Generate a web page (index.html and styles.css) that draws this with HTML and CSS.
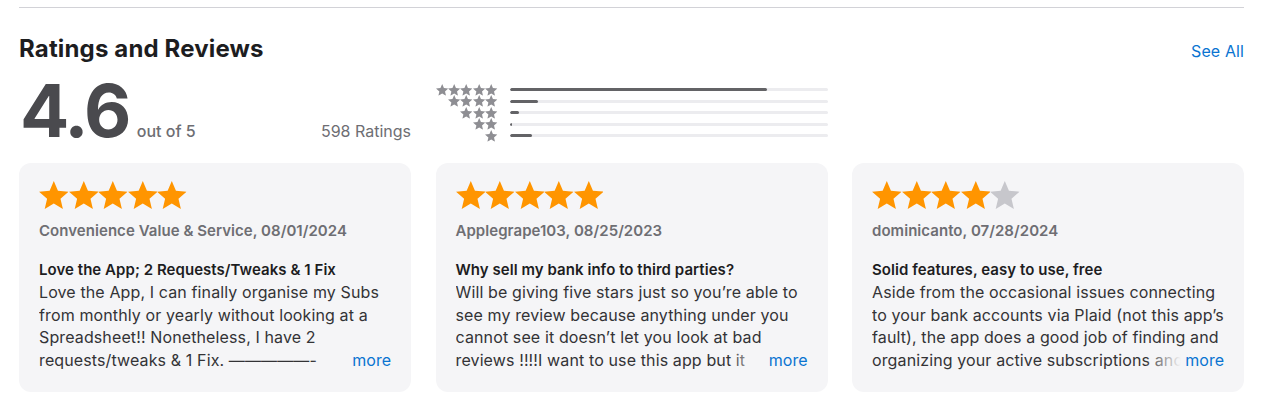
FILE: index.html
```html
<!DOCTYPE html>
<html lang="en">
<head>
<meta charset="utf-8">
<title>Ratings and Reviews</title>
<link rel="stylesheet" href="styles.css">
</head>
<body>
<svg width="0" height="0" class="defs">
  <defs>
    <symbol id="star" viewBox="2 2 20 19"><path d="M12 17.27L18.18 21l-1.64-7.03L22 9.24l-7.19-.61L12 2 9.19 8.63 2 9.24l5.46 4.73L5.82 21z"/></symbol>
  </defs>
</svg>
<section class="reviews">
  <div class="rule"></div>
  <header class="head">
    <h2 class="title">Ratings and Reviews</h2>
    <a class="see-all" href="#">See All</a>
  </header>
  <div class="summary">
    <div class="score">
      <div class="score-main"><span class="big">4.6</span><span class="outof">out of 5</span></div>
      <div class="count">598 Ratings</div>
    </div>
    <div class="hist">
      <div class="hrow"><div class="hstars"><svg><use href="#star"/></svg><svg><use href="#star"/></svg><svg><use href="#star"/></svg><svg><use href="#star"/></svg><svg><use href="#star"/></svg></div><div class="bar"><div class="fill" style="width:81%"></div></div></div>
      <div class="hrow"><div class="hstars"><svg><use href="#star"/></svg><svg><use href="#star"/></svg><svg><use href="#star"/></svg><svg><use href="#star"/></svg></div><div class="bar"><div class="fill" style="width:9%"></div></div></div>
      <div class="hrow"><div class="hstars"><svg><use href="#star"/></svg><svg><use href="#star"/></svg><svg><use href="#star"/></svg></div><div class="bar"><div class="fill" style="width:3%"></div></div></div>
      <div class="hrow"><div class="hstars"><svg><use href="#star"/></svg><svg><use href="#star"/></svg></div><div class="bar"><div class="fill" style="width:0.8%"></div></div></div>
      <div class="hrow"><div class="hstars"><svg><use href="#star"/></svg></div><div class="bar"><div class="fill" style="width:7%"></div></div></div>
    </div>
  </div>
  <div class="cards">
    <article class="card">
      <div class="stars"><svg class="on"><use href="#star"/></svg><svg class="on"><use href="#star"/></svg><svg class="on"><use href="#star"/></svg><svg class="on"><use href="#star"/></svg><svg class="on"><use href="#star"/></svg></div>
      <div class="author">Convenience Value &amp; Service, 08/01/2024</div>
      <h3 class="rtitle">Love the App; 2 Requests/Tweaks &amp; 1 Fix</h3>
      <div class="body-wrap">
        <p class="body">Love the App, I can finally organise my Subs from monthly or yearly without looking at a Spreadsheet!! Nonetheless, I have 2 requests/tweaks &amp; 1 Fix. —————-<br>1. Please add the option to sort by price.</p>
        <a class="more" href="#">more</a>
      </div>
    </article>
    <article class="card">
      <div class="stars"><svg class="on"><use href="#star"/></svg><svg class="on"><use href="#star"/></svg><svg class="on"><use href="#star"/></svg><svg class="on"><use href="#star"/></svg><svg class="on"><use href="#star"/></svg></div>
      <div class="author">Applegrape103, 08/25/2023</div>
      <h3 class="rtitle">Why sell my bank info to third parties?</h3>
      <div class="body-wrap">
        <p class="body">Will be giving five stars just so you’re able to see my review because anything under you cannot see it doesn’t let you look at bad reviews !!!!I want to use this app but it unfortunately shares my information.</p>
        <a class="more" href="#">more</a>
      </div>
    </article>
    <article class="card">
      <div class="stars"><svg class="on"><use href="#star"/></svg><svg class="on"><use href="#star"/></svg><svg class="on"><use href="#star"/></svg><svg class="on"><use href="#star"/></svg><svg class="off"><use href="#star"/></svg></div>
      <div class="author">dominicanto, 07/28/2024</div>
      <h3 class="rtitle">Solid features, easy to use, free</h3>
      <div class="body-wrap">
        <p class="body">Aside from the occasional issues connecting to your bank accounts via Plaid (not this app’s fault), the app does a good job of finding and organizing your active subscriptions and bills.</p>
        <a class="more" href="#">more</a>
      </div>
    </article>
  </div>
</section>
</body>
</html>
```

FILE: styles.css
```css
* { box-sizing: border-box; }
html, body { margin: 0; padding: 0; background: #fff; }
body {
  font-family: Inter, "Noto Sans", "Liberation Sans", sans-serif;
  color: #1d1d1f;
  -webkit-font-smoothing: antialiased;
}
.defs { position: absolute; width: 0; height: 0; }
.reviews {
  width: 1225px;
  margin-left: 19px;
  padding-top: 7px;
}
.rule { height: 1px; background: #d2d2d7; }
.head {
  display: flex;
  justify-content: space-between;
  align-items: baseline;
  margin-top: 27px;
}
.title {
  margin: 0;
  font-size: 24px;
  line-height: 28px;
  font-weight: 700;
  letter-spacing: 0.15px;
}
.see-all {
  color: #0a74d1;
  text-decoration: none;
  font-size: 16px;
  letter-spacing: 0.1px;
}
.summary {
  display: grid;
  grid-template-columns: repeat(3, 1fr);
  column-gap: 24.5px;
  margin-top: 7px;
}
.score {
  display: flex;
  justify-content: space-between;
  align-items: baseline;
}
.score-main { display: flex; align-items: baseline; }
.big {
  font-size: 73px;
  line-height: 82px;
  font-weight: 700;
  color: #4a4a4e;
  letter-spacing: -2.6px;
  margin-left: 1px;
}
.outof {
  font-size: 16px;
  font-weight: 500;
  color: #6e6e73;
  margin-left: 8px;
}
.count {
  font-size: 16px;
  color: #6e6e73;
}
.hist {
  padding-top: 14px;
  display: flex;
  flex-direction: column;
}
.hrow {
  display: flex;
  align-items: center;
  height: 11.5px;
}
.hstars {
  width: 62px;
  display: flex;
  justify-content: flex-end;
  fill: #8e8e93;
}
.hstars svg { width: 12.4px; height: 11.8px; }
.bar {
  margin-left: 12px;
  flex: 1;
  height: 3px;
  border-radius: 2px;
  background: #ececef;
  overflow: hidden;
}
.fill { height: 100%; background: #636366; border-radius: 2px; }
.cards {
  display: grid;
  grid-template-columns: repeat(3, 1fr);
  column-gap: 24.5px;
  margin-top: 11px;
}
.card {
  background: #f5f5f7;
  border-radius: 12px;
  padding: 18px 20px 21px 20px;
  height: 229px;
}
.stars { display: flex; height: 28px; }
.stars svg { width: 29.6px; height: 28px; }
.stars .on { fill: #ff9500; }
.stars .off { fill: #c7c7cc; }
.author {
  margin-top: 11px;
  font-size: 15px;
  line-height: 22.4px;
  font-weight: 600;
  color: #6e6e73;
  letter-spacing: 0.05px;
}
.rtitle {
  margin: 16.6px 0 0 0;
  font-size: 15px;
  line-height: 22.4px;
  font-weight: 600;
  color: #1d1d1f;
  letter-spacing: 0.05px;
}
.body-wrap { position: relative; }
.body {
  margin: 0;
  font-size: 16px;
  line-height: 22.4px;
  color: #333336;
  letter-spacing: 0.12px;
  max-height: 89.6px;
  overflow: hidden;
}
.more {
  position: absolute;
  right: 0;
  bottom: 0;
  line-height: 22.4px;
  font-size: 16px;
  color: #0a74d1;
  text-decoration: none;
  padding-left: 40px;
  background: linear-gradient(to right, rgba(245,245,247,0), #f5f5f7 36px);
}
```
